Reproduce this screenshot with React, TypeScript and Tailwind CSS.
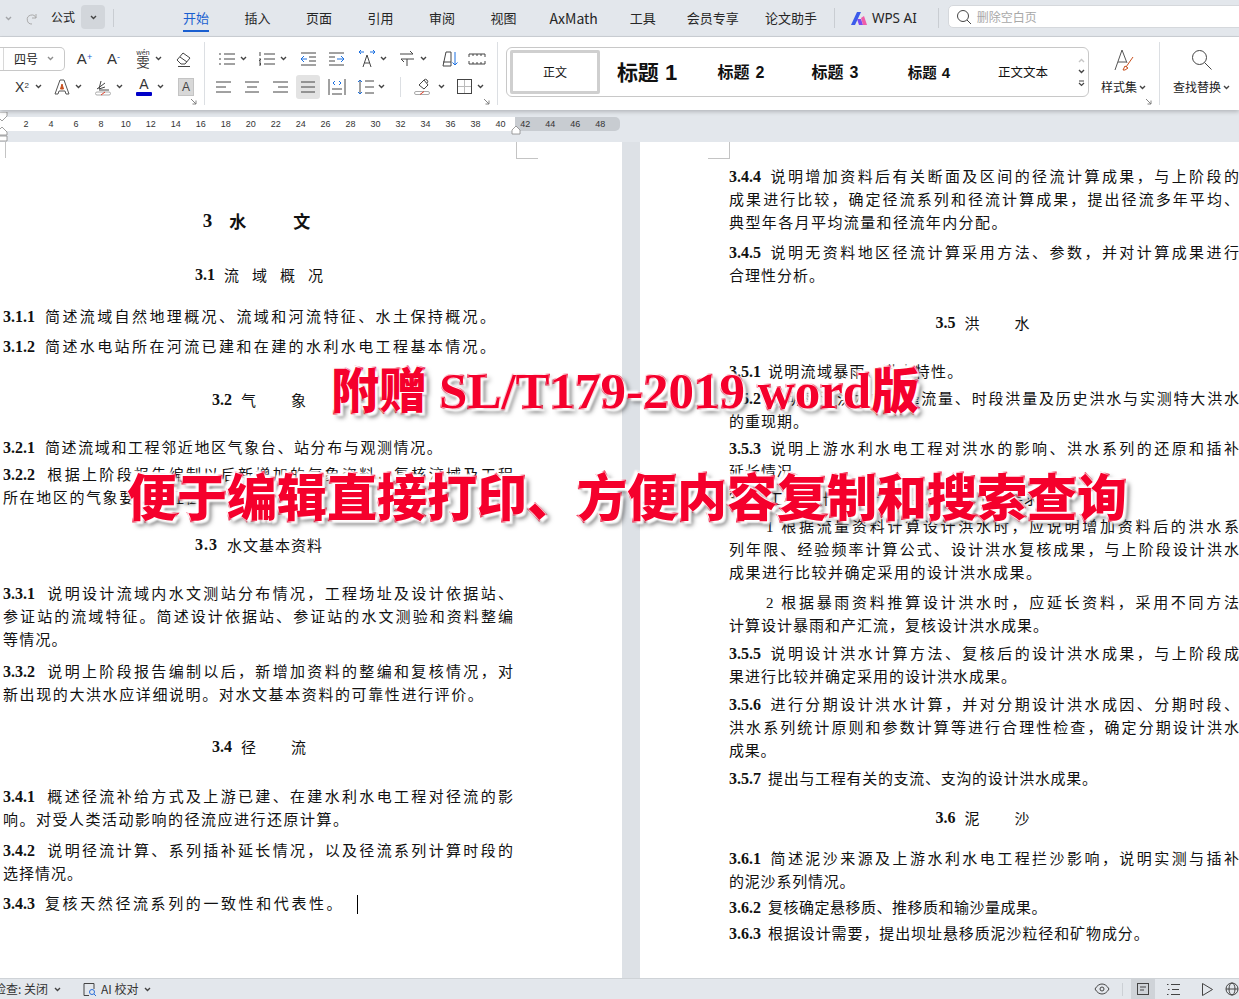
import React from "react";

const S = ({ w = 20, h = 20, vb = "0 0 20 20", children, c = "" }: { w?: number; h?: number; vb?: string; children: React.ReactNode; c?: string }) => (
  <svg width={w} height={h} viewBox={vb} fill="none" stroke="#444" strokeWidth={1} className={"shrink-0 " + c}>{children}</svg>
);
const Chev = ({ c = "" }: { c?: string }) => (
  <svg width="7" height="5" viewBox="0 0 7 5" fill="none" stroke="#444" strokeWidth={1.4} className={"shrink-0 " + c}><path d="M1 1l2.500 2.500L6 1" /></svg>
);
const Slot = ({ w, children, c = "" }: { w: string; children?: React.ReactNode; c?: string }) => (
  <div className={"flex items-center justify-center shrink-0 " + w + " " + c}>{children}</div>
);
const Corner = () => (
  <svg width="7" height="7" viewBox="0 0 7 7" fill="none" stroke="#777" strokeWidth={0.9}><path d="M1 1l5 5M6 2.500V6H2.500" /></svg>
);
const Lines = ({ d }: { d: string }) => <S><path d={d} /></S>;
const A = ({ c = "" }: { c?: string }) => <span className={"font-['Liberation_Sans',sans-serif] leading-none " + c}>A</span>;

function Tab({ children, active = false }: { children: React.ReactNode; active?: boolean }) {
  return (
    <div className={"relative text-[13px] leading-[18px] whitespace-nowrap " + (active ? "text-[#1a5fd0]" : "text-[#262626]")}>
      {children}
      {active && <div className="absolute left-0 right-0 top-[21px] h-[2px] bg-[#1a5fd0]" />}
    </div>
  );
}

function TopBar() {
  return (
    <div className="h-[37px] bg-[#e3e7ec] border-b border-[#cdd1d6] flex items-center shrink-0">
      <Slot w="w-[16px]"><Chev c="opacity-40" /></Slot>
      <Slot w="w-[32px]">
        <S w={14} h={14} vb="0 0 14 14"><g stroke="#aaa"><path d="M11 3v4H7" /><path d="M11 7A4.500 4.500 0 1 0 7 13" /></g></S>
      </Slot>
      <div className="text-[12px] leading-none text-[#222] w-[33px] pl-[3px] -mt-[3px]">公式</div>
      <div className="w-[24px] h-[24px] rounded-[4px] bg-[#d2d6db] flex items-center justify-center self-start mt-[5px]"><Chev /></div>
      <div className="w-px h-[18px] bg-[#c9cdd2] ml-[8px] mr-[69px]" />
      <div className="flex gap-[35.5px] items-center">
        <Tab active>开始</Tab><Tab>插入</Tab><Tab>页面</Tab><Tab>引用</Tab><Tab>审阅</Tab><Tab>视图</Tab>
      </div>
      <div className="ml-[33px] mr-[32px] text-[14px] leading-[18px] text-[#262626]">AxMath</div>
      <Tab>工具</Tab>
      <div className="flex gap-[26px] ml-[31px]"><Tab>会员专享</Tab><Tab>论文助手</Tab></div>
      <div className="w-px h-[20px] bg-[#c9cdd2] ml-[17px] mr-[16px]" />
      <svg width="16" height="13" viewBox="0 0 16 13" className="shrink-0">
        <path d="M0 13L6 0h4L4 13z" fill="#3b5bea" />
        <path d="M6 7h4l2 6H8z" fill="#7a4bf0" />
        <path d="M10 6l3-2 3 9h-4z" fill="#ef5da8" />
      </svg>
      <div className="ml-[5px] text-[13.5px] text-[#262626] whitespace-nowrap font-['Noto_Sans',sans-serif]">WPS AI</div>
      <div className="w-px h-[20px] bg-[#c9cdd2] ml-[21px] mr-[9px]" />
      <div className="flex-1 h-[23px] bg-white border border-[#d5d8dc] rounded-l-[5px] flex items-center pl-[7px] gap-[5px] -mr-[10px] self-start mt-[5px]">
        <S w={16} h={16} vb="0 0 16 16"><circle cx="7" cy="7" r="5.500" /><path d="M11 11l4 4" /></S>
        <span className="text-[12px] text-[#a8a8a8] leading-none">删除空白页</span>
      </div>
    </div>
  );
}

const GalleryItem = ({ t, d, c, dc }: { t: string; d: string; c: string; dc: string }) => (
  <div className={"w-[94px] flex items-baseline justify-center font-bold text-[#111] leading-none whitespace-nowrap " + c}>
    {t}<span className={"font-['Liberation_Sans',sans-serif] " + dc}>{d}</span>
  </div>
);

function Ribbon() {
  return (
    <div className="h-[73px] bg-white shadow-[0_2px_4px_rgba(0,0,0,0.2)] relative z-10 flex shrink-0">
      {/* font group */}
      <div className="w-[205px] shrink-0 border-r border-[#dcdfe3] my-[5px] relative">
        <div className="flex items-center h-[23px] mt-[5px]">
          <div className="w-[65px] h-[24px] border border-[#c8c8c8] border-l-0 rounded-r-[5px] flex items-center pl-[4px] shrink-0 relative">
            <div className="absolute left-[3px] top-0 bottom-0 w-px bg-[#d8d8d8]" />
            <div className="w-[10px] h-full" />
            <span className="text-[12px] text-[#222] w-[30px] leading-none">四号</span>
            <Chev c="ml-[3px] opacity-60" />
          </div>
          <Slot w="w-[19px]" c="ml-[10px]"><span className="text-[15px] text-[#333] leading-none font-['Liberation_Sans',sans-serif]">A<sup className="text-[#1a5fd0] text-[9px]">+</sup></span></Slot>
          <Slot w="w-[19px]" c="ml-[10px]"><span className="text-[15px] text-[#333] leading-none font-['Liberation_Sans',sans-serif]">A<sup className="text-[#1a5fd0] text-[9px]">-</sup></span></Slot>
          <Slot w="w-[20px]" c="ml-[10px]">
            <span className="flex flex-col items-center leading-none"><span className="text-[7px] leading-[7px] text-[#333]">wén</span><span className="text-[13px] leading-[12px] text-[#333]">雯</span></span>
          </Slot>
          <Chev c="ml-[2px]" />
          <Slot w="w-[20px]" c="ml-[12px]">
            <S w={18} h={18} vb="0 0 18 18"><path d="M2 10l6-7 7 5-5 6H6z" /><path d="M5 7l7 5" /><path d="M3 16.500h12" /></S>
          </Slot>
        </div>
        <div className="flex items-center h-[23px] mt-[5px] pl-[14px]">
          <Slot w="w-[16px]"><span className="text-[14px] text-[#333] leading-none font-['Liberation_Sans',sans-serif]">X<sup className="text-[8px]">2</sup></span></Slot>
          <Chev c="ml-[5px]" />
          <Slot w="w-[18px]" c="ml-[11px]">
            <S w={18} h={18} vb="0 0 18 18"><path d="M2 16L7 2h4l5 14h-3l-1-3H6l-1 3z" stroke="#555" /><path d="M7.500 11L9 6l1.500 5z" fill="#c8501e" stroke="#c8501e" /></S>
          </Slot>
          <Chev c="ml-[4px]" />
          <Slot w="w-[18px]" c="ml-[12px]">
            <S w={18} h={18} vb="0 0 18 18"><path d="M3 11l8-6M7 3l-2 8 6-2M5 12h10" /><rect x="1.500" y="14" width="15" height="3" rx="1.500" stroke="#aaa" /><path d="M7 17l4-3" stroke="#e0402a" /></S>
          </Slot>
          <Chev c="ml-[4px]" />
          <div className="w-[18px] ml-[12px] flex flex-col items-center shrink-0">
            <A c="text-[14px] text-[#333]" />
            <div className="w-[16px] h-[4px] rounded-[1px] bg-[#0000c8] mt-[1px]" />
          </div>
          <Chev c="ml-[4px]" />
          <div className="w-[16px] h-[18px] bg-[#d8d8d8] border border-[#c4c4c4] flex items-center justify-center ml-[14px]"><A c="text-[12px] text-[#444]" /></div>
        </div>
        <div className="absolute right-[7px] bottom-[0px]"><Corner /></div>
      </div>
      {/* paragraph group */}
      <div className="w-[293px] shrink-0 border-r border-[#dcdfe3] my-[5px] relative">
        <div className="flex items-center h-[23px] mt-[5px] pl-[12px]">
          <Slot w="w-[20px]"><Lines d="M7 5h11M7 10h11M7 15h11M2 5h2M2 10h2M2 15h2" /></Slot><Chev c="ml-[2.5px]" />
          <Slot w="w-[20px]" c="ml-[10.5px]"><Lines d="M7 5h11M7 10h11M7 15h11M3 3v4M2 10h2l-2 2h2M2 14h2l-1 1 1 1H2" /></Slot><Chev c="ml-[2.5px]" />
          <Slot w="w-[20px]" c="ml-[12.5px]"><S><path d="M2 4h15M10 8h7M10 12h7M2 16h15" /><path d="M8 10H2M5 7l-3 3 3 3" stroke="#1a6fe0" /></S></Slot>
          <Slot w="w-[20px]" c="ml-[8px]"><S><path d="M2 4h15M2 8h6M2 12h6M2 16h15" /><path d="M10 10h7M14 7l3 3-3 3" stroke="#1a6fe0" /></S></Slot>
          <Slot w="w-[22px]" c="ml-[9px]"><S><path d="M2 3h5M2 3l2-2M2 3l2 2M18 3h-5M18 3l-2-2M18 3l-2 2" stroke="#1a6fe0" /><path d="M6 18l4-12 4 12M7.500 14h5" /></S></Slot><Chev c="ml-[1.5px]" />
          <Slot w="w-[20px]" c="ml-[10.5px]"><S><path d="M3 5h13l-3-3M17 10H4l3 3M10 10v7" /></S></Slot><Chev c="ml-[2.5px]" />
          <Slot w="w-[20px]" c="ml-[13.5px]"><S><path d="M3 17L6 3h5v14zM3 13h8" /><path d="M15 3v13M12.500 13.500L15 16l2.500-2.500" stroke="#1a6fe0" /></S></Slot>
          <Slot w="w-[20px]" c="ml-[7px]"><S><path d="M2 5h16M2 15h16M2 5v3M18 5v3M2 15v-3M18 15v-3M6 5v2M10 5v2M14 5v2M6 15v-2M10 15v-2M14 15v-2" /></S></Slot>
        </div>
        <div className="flex items-center h-[23px] mt-[5px] pl-[9px]">
          <Slot w="w-[20px]"><Lines d="M2 5h15M2 10h10M2 15h15" /></Slot>
          <Slot w="w-[20px]" c="ml-[8px]"><Lines d="M3 5h14M5 10h10M3 15h14" /></Slot>
          <Slot w="w-[20px]" c="ml-[8px]"><Lines d="M3 5h15M8 10h10M3 15h15" /></Slot>
          <Slot w="w-[24px]" c="ml-[6px] h-[24px] rounded-[3px] bg-[#e3e3e3]"><Lines d="M3 5h14M3 10h14M3 15h14" /></Slot>
          <Slot w="w-[20px]" c="ml-[7px]"><S><path d="M2 2v16M18 2v16M5 17h10M5 12h10" /><path d="M8 4L6 6l2 2M12 4l2 2-2 2" stroke="#1a6fe0" /></S></Slot>
          <Slot w="w-[20px]" c="ml-[9px]"><S><path d="M9 4h9M9 10h9M9 16h9M4 3v14" /><path d="M2 5l2-2 2 2M2 15l2 2 2-2" stroke="#1a6fe0" /></S></Slot><Chev c="ml-[2px]" />
          <div className="w-px h-[20px] bg-[#dcdfe3] ml-[15px]" />
          <Slot w="w-[20px]" c="ml-[12px]"><S><path d="M6 8l5-5 4 5-4 4z" /><path d="M14 6a2 2 0 1 0-3-3" /><rect x="1.500" y="14.500" width="15" height="3" rx="1.500" stroke="#aaa" /><path d="M7 17.500l4-3" stroke="#e0402a" /></S></Slot><Chev c="ml-[5px]" />
          <Slot w="w-[18px]" c="ml-[10.5px]"><S w={17} h={17} vb="0 0 17 17"><rect x="1.500" y="1.500" width="14" height="14" /><path d="M8.500 2v13M2 8.500h13" stroke="#bbb" /></S></Slot><Chev c="ml-[3.5px]" />
        </div>
        <div className="absolute right-[7px] bottom-[0px]"><Corner /></div>
      </div>
      {/* gallery */}
      <div className="w-[583px] shrink-0 h-[50px] mt-[10px] ml-[8px] border border-[#c8c8c8] rounded-[6px] flex items-center pl-[3px]">
        <div className="w-[90px] h-[44px] border-[3px] border-[#cfcfcf] rounded-[2px] flex items-center justify-center text-[12px] text-[#111] shrink-0">正文</div>
        <GalleryItem t="标题" d="1" c="text-[21px]" dc="text-[22px] ml-[6px]" />
        <GalleryItem t="标题" d="2" c="text-[16px]" dc="text-[16px] ml-[6px]" />
        <GalleryItem t="标题" d="3" c="text-[16px]" dc="text-[16px] ml-[6px]" />
        <GalleryItem t="标题" d="4" c="text-[14.5px]" dc="text-[15px] ml-[5px]" />
        <div className="w-[94px] text-center text-[12.5px] text-[#111] leading-none">正文文本</div>
        <div className="flex flex-col items-center gap-[6px] w-[12px] ml-[5px]">
          <Chev c="rotate-180 opacity-30" /><Chev />
          <svg width="7" height="7" viewBox="0 0 7 7" fill="none" stroke="#444" strokeWidth={1.2}><path d="M1 1h5M1 3l2.500 2.500L6 3" /></svg>
        </div>
      </div>
      {/* styles */}
      <div className="w-[71px] shrink-0 border-r border-[#dcdfe3] my-[5px] relative flex flex-col items-center pl-[1px]">
        <svg width="22" height="24" viewBox="0 0 22 24" fill="none" stroke="#555" strokeWidth={1} className="mt-[6px] -ml-[1px]"><path d="M2 22L9 2l5 13" /><path d="M5 14h8" /><path d="M20 9l-7 10" stroke="#c8501e" /><path d="M12 18l3 2-3 2h-2z" stroke="#c8501e" /></svg>
        <div className="flex items-center gap-[2px] text-[12px] leading-none text-[#222] mt-[9px] -ml-[2px]">样式集<Chev /></div>
        <div className="absolute right-[7px] bottom-[0px]"><Corner /></div>
      </div>
      <div className="flex-1 flex flex-col items-center my-[5px] pl-[4px]">
        <S w={24} h={24} vb="0 0 24 24" c="mt-[6px]"><circle cx="9.500" cy="9.500" r="7" /><path d="M14.500 14.500l7 7" /></S>
        <div className="flex items-center gap-[2px] text-[12px] leading-none text-[#222] mt-[9px] whitespace-nowrap">查找替换<Chev /></div>
      </div>
    </div>
  );
}

function Ruler() {
  const nums = Array.from({ length: 24 }, (_, i) => (i + 1) * 2);
  return (
    <div className="h-[32px] bg-[#e3e7ec] shrink-0 relative pt-[7px]">
      <div className="h-[14px] w-[620px] flex rounded-r-[5px] overflow-hidden">
        <div className="w-[515px] bg-white shrink-0" />
        <div className="flex-1 bg-[#c8ccd1]" />
      </div>
      <div className="absolute left-[13.5px] top-[7px] h-[14px] flex text-[9px] leading-[14px] text-[#333] font-['Liberation_Sans',sans-serif]">
        {nums.map((n) => <div key={n} className="w-[24.97px] text-center">{n}</div>)}
      </div>
      <svg width="9" height="30" viewBox="0 0 9 30" className="absolute left-0 top-[2px]" fill="#fff" stroke="#888" strokeWidth={0.8}>
        <path d="M-1 0h8v4l-5 5-3-3zM-1 18l3-3 5 5v3h-8zM-1 24h8v5h-8z" />
      </svg>
      <svg width="10" height="10" viewBox="0 0 10 10" className="absolute left-[511px] top-[15px]" fill="#fff" stroke="#888" strokeWidth={0.8}>
        <path d="M1 9V5l4-4 4 4v4z" />
      </svg>
    </div>
  );
}

const N = ({ children }: { children: React.ReactNode }) => (
  <span className="inline-block font-['Liberation_Serif',serif] font-bold text-[16px] tracking-normal mr-[10px] [text-align-last:left]">{children}</span>
);
const R = ({ children }: { children: React.ReactNode }) => (
  <span className="inline-block font-['Liberation_Serif',serif] font-bold text-[16px] tracking-normal mr-[7px] [text-align-last:left]">{children}</span>
);
const L = ({ children, f = false, c = "" }: { children: React.ReactNode; f?: boolean; c?: string }) => (
  <div className={"h-[23px] " + (f ? "[text-align-last:justify] " : "whitespace-nowrap ") + c}>{children}</div>
);
const H = ({ n, a, c = "" }: { n: string; a: string[]; c?: string }) => (
  <div className={"h-[23px] flex justify-center items-center whitespace-nowrap " + c}>
    <span className="font-['Liberation_Serif',serif] font-bold text-[16px] mr-[9px]">{n}</span>
    <span>{a[0]}</span>
    {a[1] && <span className={a.length > 2 ? "ml-[13px]" : "ml-[35px]"}>{a[1]}</span>}
    {a[2] && <span className="ml-[13px]">{a[2]}</span>}
    {a[3] && <span className="ml-[13px]">{a[3]}</span>}
  </div>
);

function LeftPage() {
  return (
    <div className="w-[622px] shrink-0 bg-white relative overflow-hidden">
      <div className="absolute left-[5px] top-0 w-px h-[16px] bg-[#c4c4c4]" />
      <div className="absolute left-[516px] top-0 w-px h-[16px] bg-[#c4c4c4]" />
      <div className="absolute left-[516px] top-[16px] w-[22px] h-px bg-[#c4c4c4]" />
      <div className="w-[510px] ml-[3px] pt-[67px] text-[15px] leading-[23px] text-[#111]">
        <div className="h-[23px] flex justify-center items-center text-[17px] font-bold pr-[3px]">
          <span className="font-['Liberation_Serif',serif] text-[19px] mr-[17px]">3</span><span>水</span><span className="ml-[47px]">文</span>
        </div>
        <H n="3.1" a={["流", "域", "概", "况"]} c="mt-[31px] pl-[2px]" />
        <L c="mt-[18px] tracking-[2.4px]"><N>3.1.1</N>简述流域自然地理概况、流域和河流特征、水土保持概况。</L>
        <L c="mt-[7px] tracking-[2.4px]"><N>3.1.2</N>简述水电站所在河流已建和在建的水利水电工程基本情况。</L>
        <H n="3.2" a={["气", "象"]} c="mt-[31px] pl-[2px]" />
        <L c="mt-[24px] tracking-[1.6px]"><N>3.2.1</N>简述流域和工程邻近地区气象台、站分布与观测情况。</L>
        <L f c="mt-[4px]"><N>3.2.2</N>根据上阶段报告编制以后新增加的气象资料，复核流域及工程</L>
        <L c="tracking-[1.6px]">所在地区的气象要素特征值。</L>
        <H n="3.3" a={["水文基本资料"]} c="mt-[25px] pl-[2px] tracking-[1px]" />
        <L f c="mt-[25px]"><N>3.3.1</N>说明设计流域内水文测站分布情况，工程场址及设计依据站、</L>
        <L f>参证站的流域特征。简述设计依据站、参证站的水文测验和资料整编</L>
        <L c="tracking-[1.2px]">等情况。</L>
        <L f c="mt-[9px]"><N>3.3.2</N>说明上阶段报告编制以后，新增加资料的整编和复核情况，对</L>
        <L c="tracking-[1.6px]">新出现的大洪水应详细说明。对水文基本资料的可靠性进行评价。</L>
        <H n="3.4" a={["径", "流"]} c="mt-[30px] pl-[2px]" />
        <L f c="mt-[26px]"><N>3.4.1</N>概述径流补给方式及上游已建、在建水利水电工程对径流的影</L>
        <L c="tracking-[1.5px]">响。对受人类活动影响的径流应进行还原计算。</L>
        <L f c="mt-[8px]"><N>3.4.2</N>说明径流计算、系列插补延长情况，以及径流系列计算时段的</L>
        <L c="tracking-[1px]">选择情况。</L>
        <L c="mt-[7px] tracking-[2.6px]"><N>3.4.3</N>复核天然径流系列的一致性和代表性。<span className="inline-block w-px h-[19px] bg-black align-middle ml-[13px]" /></L>
      </div>
    </div>
  );
}

function RightPage() {
  return (
    <div className="flex-1 bg-white relative overflow-hidden">
      <div className="absolute left-[68px] top-[16px] w-[22px] h-px bg-[#c4c4c4]" />
      <div className="absolute left-[89px] top-0 w-px h-[16px] bg-[#c4c4c4]" />
      <div className="w-[510px] ml-[89px] pt-[22px] text-[15px] leading-[23px] text-[#111]">
        <L f><R>3.4.4</R>说明增加资料后有关断面及区间的径流计算成果，与上阶段的</L>
        <L f>成果进行比较，确定径流系列和径流计算成果，提出径流多年平均、</L>
        <L c="tracking-[1.4px]">典型年各月平均流量和径流年内分配。</L>
        <L f c="mt-[7px]"><R>3.4.5</R>说明无资料地区径流计算采用方法、参数，并对计算成果进行</L>
        <L c="tracking-[1px]">合理性分析。</L>
        <H n="3.5" a={["洪", "水"]} c="mt-[25px] pr-[3px]" />
        <L c="mt-[25px] tracking-[1.3px]"><R>3.5.1</R>说明流域暴雨、洪水特性。</L>
        <L f c="mt-[4px]"><R>3.5.2</R>说明实测洪水的洪峰流量、时段洪量及历史洪水与实测特大洪水</L>
        <L c="tracking-[1px]">的重现期。</L>
        <L f c="mt-[4px]"><R>3.5.3</R>说明上游水利水电工程对洪水的影响、洪水系列的还原和插补</L>
        <L c="tracking-[1px]">延长情况。</L>
        <L c="mt-[4px] tracking-[1px]"><R>3.5.4</R>工程设计洪水计算成果应符合下列要求：</L>
        <L f c="mt-[5px] pl-[37px]"><span className="font-['Liberation_Serif',serif] mr-[5px]">1</span>根据流量资料计算设计洪水时，应说明增加资料后的洪水系</L>
        <L f>列年限、经验频率计算公式、设计洪水复核成果，与上阶段设计洪水</L>
        <L c="tracking-[1.5px]">成果进行比较并确定采用的设计洪水成果。</L>
        <L f c="mt-[7px] pl-[37px]"><span className="font-['Liberation_Serif',serif] mr-[5px]">2</span>根据暴雨资料推算设计洪水时，应延长资料，采用不同方法</L>
        <L c="tracking-[1px]">计算设计暴雨和产汇流，复核设计洪水成果。</L>
        <L f c="mt-[5px]"><R>3.5.5</R>说明设计洪水计算方法、复核后的设计洪水成果，与上阶段成</L>
        <L c="tracking-[1px]">果进行比较并确定采用的设计洪水成果。</L>
        <L f c="mt-[5px]"><R>3.5.6</R>进行分期设计洪水计算，并对分期设计洪水成因、分期时段、</L>
        <L f>洪水系列统计原则和参数计算等进行合理性检查，确定分期设计洪水</L>
        <L c="tracking-[0.7px]">成果。</L>
        <L c="mt-[5px] tracking-[0.7px]"><R>3.5.7</R>提出与工程有关的支流、支沟的设计洪水成果。</L>
        <H n="3.6" a={["泥", "沙"]} c="mt-[17px] pr-[3px]" />
        <L f c="mt-[17px]"><R>3.6.1</R>简述泥沙来源及上游水利水电工程拦沙影响，说明实测与插补</L>
        <L c="tracking-[0.8px]">的泥沙系列情况。</L>
        <L c="mt-[3px] tracking-[0.5px]"><R>3.6.2</R>复核确定悬移质、推移质和输沙量成果。</L>
        <L c="mt-[3px] tracking-[0.9px]"><R>3.6.3</R>根据设计需要，提出坝址悬移质泥沙粒径和矿物成分。</L>
      </div>
    </div>
  );
}

function StatusBar() {
  return (
    <div className="h-[21px] bg-[#e3e7ec] border-t border-[#cfd3d7] flex items-center shrink-0 text-[12px] text-[#333]">
      <div className="w-[48px] flex justify-end overflow-hidden whitespace-nowrap leading-none">拼写检查: 关闭</div>
      <Chev c="ml-[6px]" />
      <S w={15} h={15} vb="0 0 15 15" c="ml-[21px]"><path d="M7 13.500H2V1.500h10V7" /><circle cx="10" cy="10" r="2.500" stroke="#2a6fd8" /><path d="M12 12l2 2" stroke="#2a6fd8" /></S>
      <div className="ml-[4px] whitespace-nowrap leading-none">AI 校对</div>
      <Chev c="ml-[5px]" />
      <div className="flex-1" />
      <S w={16} h={16} vb="0 0 16 16"><path d="M1 8c2-3.500 4.500-5 7-5s5 1.500 7 5c-2 3.500-4.500 5-7 5s-5-1.500-7-5z" /><circle cx="8" cy="8" r="2" /></S>
      <div className="w-px h-[13px] bg-[#ccd0d5] ml-[12px] mr-[8px]" />
      <div className="w-[24px] h-[21px] bg-[#cfd3d8] flex items-center justify-center">
        <S w={14} h={14} vb="0 0 14 14"><rect x="1.500" y="1.500" width="11" height="11" /><path d="M4 5h6M4 8h4" /></S>
      </div>
      <Slot w="w-[15px]" c="ml-[11px]"><S w={15} h={15} vb="0 0 15 15"><path d="M5 2.500h9M6 7.500h7M5 12.500h9M1 2.500h1.500M2 7.500h1.500M1 12.500h1.500" /></S></Slot>
      <Slot w="w-[14px]" c="ml-[19px]"><S w={13} h={15} vb="0 0 13 15"><path d="M1.500 1.500v12l10-6z" /></S></Slot>
      <S w={14} h={14} vb="0 0 14 14" c="ml-[11px]"><circle cx="7" cy="7" r="6" /><ellipse cx="7" cy="7" rx="3" ry="6" /><path d="M1 7h12" /></S>
    </div>
  );
}

const strokeCls = "[-webkit-text-stroke:2.5px_#f5002c] [paint-order:stroke_fill] [text-shadow:0_0_3px_#fff,0_0_3px_#fff,3px_3px_2px_#fff,-3px_-3px_2px_#fff,4px_4px_5px_rgba(0,0,0,0.65)]";

export default function App() {
  return (
    <div className="w-[1239px] h-[999px] overflow-hidden flex flex-col relative font-['Noto_Sans_CJK_SC','Noto_Sans',sans-serif] bg-[#e3e7ec]">
      <TopBar />
      <Ribbon />
      <Ruler />
      <div className="flex-1 flex min-h-0 gap-[18px] bg-[#dde1e6]">
        <LeftPage />
        <RightPage />
      </div>
      <StatusBar />
      <div className={"absolute left-[331px] top-[360px] h-[62px] leading-[62px] whitespace-nowrap text-[#f5002c] font-black text-[48px] font-['Liberation_Serif','Noto_Sans_CJK_SC',serif] " + strokeCls}>
        附赠 <span className="text-[51px]">SL/T179-2019 word</span>版
      </div>
      <div className={"absolute left-[127px] top-[463px] h-[62px] leading-[62px] whitespace-nowrap text-[#f5002c] font-black text-[50px] font-['Noto_Sans_CJK_SC',sans-serif] " + strokeCls}>
        便于编辑直接打印、方便内容复制和搜索查询
      </div>
    </div>
  );
}
